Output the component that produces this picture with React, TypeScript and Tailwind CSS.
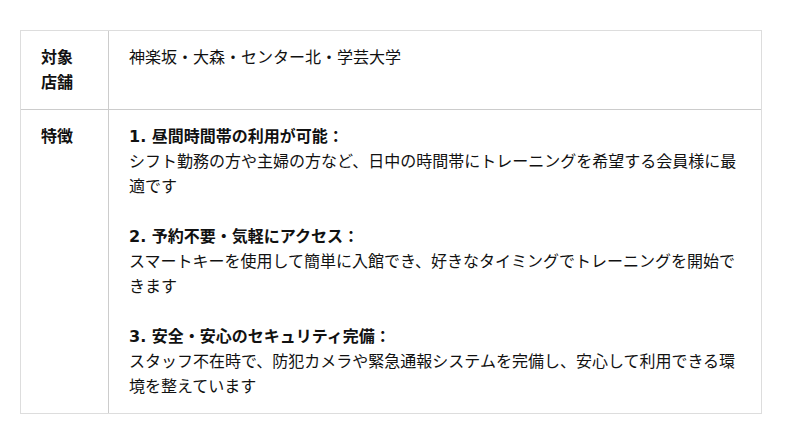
export default function App() {
  const features = [
    {
      title: "1. 昼間時間帯の利用が可能：",
      body: "シフト勤務の方や主婦の方など、日中の時間帯にトレーニングを希望する会員様に最適です",
    },
    {
      title: "2. 予約不要・気軽にアクセス：",
      body: "スマートキーを使用して簡単に入館でき、好きなタイミングでトレーニングを開始できます",
    },
    {
      title: "3. 安全・安心のセキュリティ完備：",
      body: "スタッフ不在時で、防犯カメラや緊急通報システムを完備し、安心して利用できる環境を整えています",
    },
  ];

  return (
    <div className="w-[800px] h-[444px] bg-white pt-[30px] pl-[20px] font-['DejaVu_Sans','Noto_Sans_CJK_JP',sans-serif] text-[16px] leading-[25px] text-[#111]">
      <div className="w-[742px] border border-[#ddd] grid grid-cols-[88px_1fr]">
        <div className="border-r border-b border-[#ccc] px-5 pt-[14px] pb-[14px] font-bold">
          対象
          <br />
          店舗
        </div>
        <div className="border-b border-[#ccc] px-5 pt-[14px] pb-[14px]">
          神楽坂・大森・センター北・学芸大学
        </div>
        <div className="border-r border-[#ccc] px-5 pt-[14px] pb-[14px] font-bold">特徴</div>
        <div className="px-5 pt-[14px] pb-[14px] flex flex-col gap-[25px]">
          {features.map((f, i) => (
            <div key={i}>
              <p className="font-bold">{f.title}</p>
              <p>{f.body}</p>
            </div>
          ))}
        </div>
      </div>
    </div>
  );
}
